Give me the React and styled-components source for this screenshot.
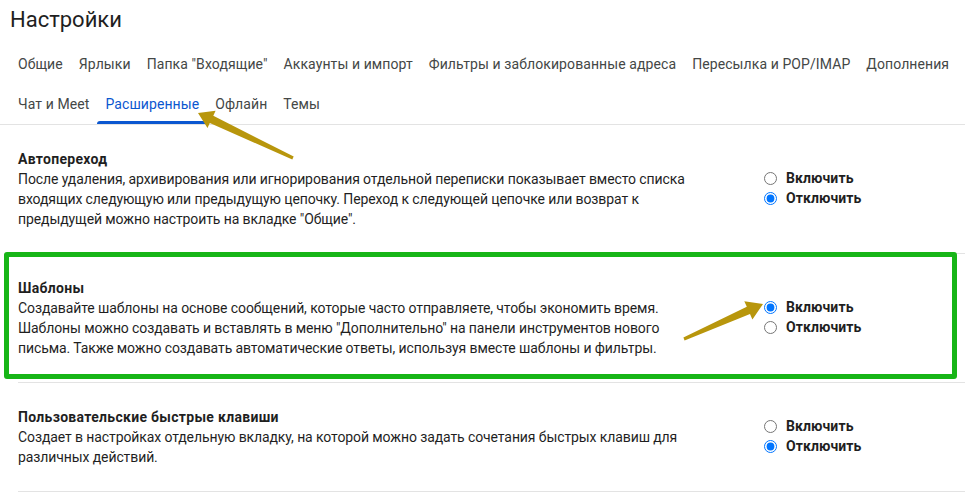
import React from 'react';
import styled, { createGlobalStyle } from 'styled-components';

const GlobalStyle = createGlobalStyle`
  html, body {
    margin: 0;
    padding: 0;
    background: #fff;
  }
  body {
    font-family: Roboto, "Noto Sans", Arial, sans-serif;
    color: #202124;
    overflow: hidden;
  }
`;

const tabRows = [
  ['Общие', 'Ярлыки', 'Папка "Входящие"', 'Аккаунты и импорт', 'Фильтры и заблокированные адреса', 'Пересылка и POP/IMAP', 'Дополнения'],
  ['Чат и Meet', 'Расширенные', 'Офлайн', 'Темы'],
];

const sections = [
  {
    id: 'autoadvance',
    title: 'Автопереход',
    text: 'После удаления, архивирования или игнорирования отдельной переписки показывает вместо списка входящих следующую или предыдущую цепочку. Переход к следующей цепочке или возврат к предыдущей можно настроить на вкладке "Общие".',
    on: false,
  },
  {
    id: 'templates',
    title: 'Шаблоны',
    text: 'Создавайте шаблоны на основе сообщений, которые часто отправляете, чтобы экономить время. Шаблоны можно создавать и вставлять в меню "Дополнительно" на панели инструментов нового письма. Также можно создавать автоматические ответы, используя вместе шаблоны и фильтры.',
    on: true,
    highlight: true,
  },
  {
    id: 'shortcuts',
    title: 'Пользовательские быстрые клавиши',
    text: 'Создает в настройках отдельную вкладку, на которой можно задать сочетания быстрых клавиш для различных действий.',
    on: false,
  },
];

// arrow polygon from tail to tip, shaft tapers toward the tail
function arrowPoints([tx, ty], [hx, hy], headLen, headHalf, shaftNear, shaftFar) {
  const dx = hx - tx;
  const dy = hy - ty;
  const len = Math.hypot(dx, dy);
  const ux = dx / len;
  const uy = dy / len;
  const px = -uy;
  const py = ux;
  const bx = hx - ux * headLen;
  const by = hy - uy * headLen;
  const pts = [
    [tx + px * shaftFar, ty + py * shaftFar],
    [bx + px * shaftNear, by + py * shaftNear],
    [bx + px * headHalf, by + py * headHalf],
    [hx, hy],
    [bx - px * headHalf, by - py * headHalf],
    [bx - px * shaftNear, by - py * shaftNear],
    [tx - px * shaftFar, ty - py * shaftFar],
  ];
  return pts.map((p) => p.map((v) => v.toFixed(1)).join(',')).join(' ');
}

const App = () => {
  return (
    <Page>
      <GlobalStyle />
      <Title>Настройки</Title>
      <Tabs>
        {tabRows.map((row, i) => (
          <TabRow key={i}>
            {row.map((t) => (
              <Tab key={t} $active={t === 'Расширенные'}>
                {t}
              </Tab>
            ))}
          </TabRow>
        ))}
      </Tabs>
      <List>
        {sections.map((s) => (
          <Section key={s.id} $highlight={s.highlight}>
            <Info>
              <SectionTitle>{s.title}</SectionTitle>
              <Description>{s.text}</Description>
            </Info>
            <Options>
              <Option>
                <input type="radio" name={s.id} defaultChecked={s.on} />
                Включить
              </Option>
              <Option>
                <input type="radio" name={s.id} defaultChecked={!s.on} />
                Отключить
              </Option>
            </Options>
          </Section>
        ))}
      </List>
      <Arrows width="965" height="503" viewBox="0 0 965 503">
        <polygon points={arrowPoints([293, 158], [198, 113], 15, 9.5, 4, 1.6)} />
        <polygon points={arrowPoints([684, 339], [763, 304], 16, 10, 4, 1.6)} />
      </Arrows>
    </Page>
  );
};

const Page = styled.div`
  position: relative;
  width: 965px;
  height: 503px;
  overflow: hidden;
`;

const Title = styled.h1`
  margin: 0;
  padding: 6px 0 0 10px;
  height: 38px;
  box-sizing: border-box;
  font-size: 22px;
  font-weight: 400;
  line-height: 28px;
  color: #1f1f1f;
`;

const Tabs = styled.nav`
  padding-left: 10px;
  border-bottom: 1px solid #e3e3e3;
  margin-top: 6px;
`;

const TabRow = styled.div`
  display: flex;
  height: 40px;
`;

const Tab = styled.div`
  position: relative;
  padding: 0 8px;
  display: flex;
  align-items: center;
  font-size: 14px;
  letter-spacing: 0.09px;
  white-space: nowrap;
  color: ${(p) => (p.$active ? '#0b57d0' : '#444746')};

  &::after {
    content: '';
    display: ${(p) => (p.$active ? 'block' : 'none')};
    position: absolute;
    left: 0;
    right: 0;
    bottom: 0;
    height: 3px;
    border-radius: 3px 3px 0 0;
    background: #0b57d0;
  }
`;

const List = styled.div`
  margin-left: 18px;
`;

const Section = styled.section`
  position: relative;
  display: grid;
  grid-template-columns: 680px auto;
  column-gap: 66px;
  align-items: center;
  padding: 24px 0;
  border-bottom: 1px solid #e3e3e3;

  &::before {
    content: '';
    display: ${(p) => (p.$highlight ? 'block' : 'none')};
    position: absolute;
    left: -14px;
    top: -2px;
    right: 8px;
    bottom: 3px;
    border: 5px solid #17b517;
    border-radius: 3px;
    pointer-events: none;
  }
`;

const Info = styled.div`
  font-size: 14px;
  line-height: 20px;
`;

const SectionTitle = styled.div`
  font-weight: 700;
  letter-spacing: 0.3px;
  color: #1f1f1f;
`;

const Description = styled.div`
  letter-spacing: -0.1px;
  color: #1f1f1f;
`;

const Options = styled.div`
  display: flex;
  flex-direction: column;
  margin-top: -2px;
`;

const Option = styled.label`
  display: flex;
  align-items: center;
  gap: 9px;
  height: 20px;
  font-size: 14px;
  font-weight: 700;
  letter-spacing: 0.1px;
  color: #1f1f1f;

  input {
    margin: 0;
    width: 13px;
    height: 13px;
  }
`;

const Arrows = styled.svg`
  position: absolute;
  top: 0;
  left: 0;
  pointer-events: none;

  polygon {
    fill: #b8960c;
  }
`;

export default App;
